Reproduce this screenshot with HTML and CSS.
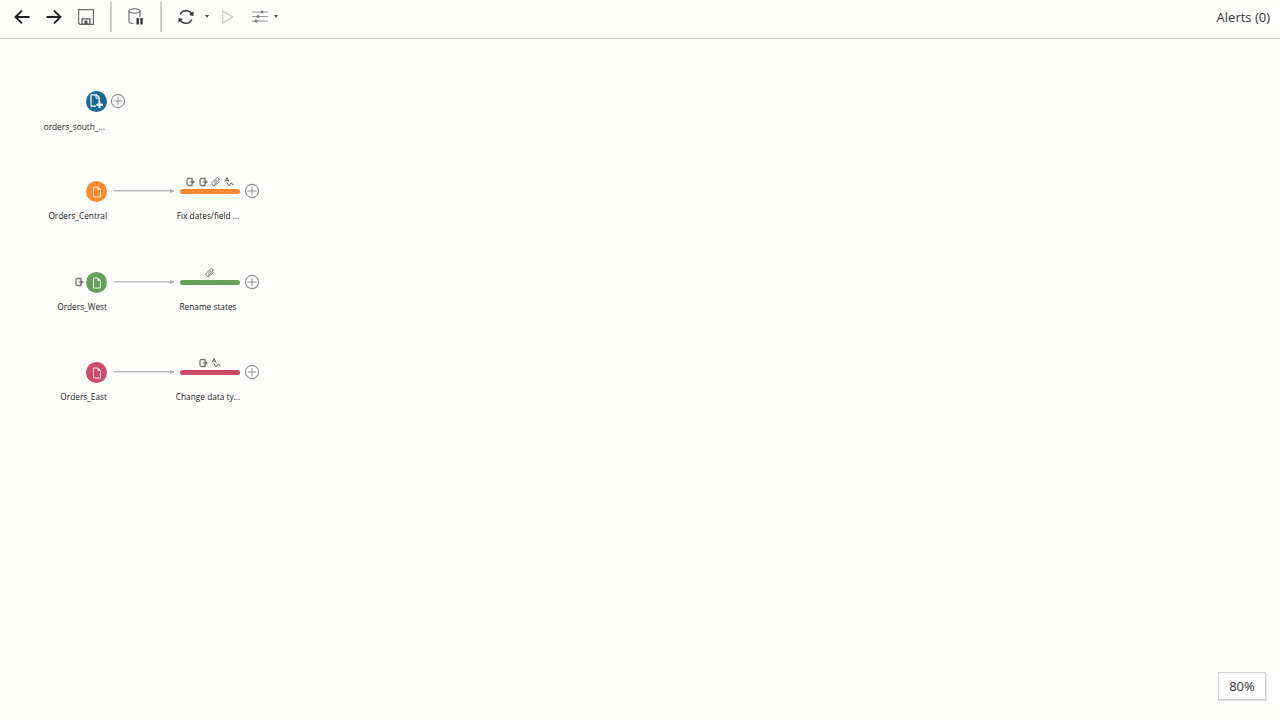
FILE: index.html
```html
<!DOCTYPE html>
<html lang="en-us">
<head>
  <meta charset="utf-8">
  <title>Flow</title>
  <link rel="stylesheet" href="styles.css">
</head>
<body>
  <svg class="defs" width="0" height="0">
    <symbol id="doc" viewBox="0 0 12 12"><path d="M2.500 1h4.500l2.500 2.500v7.500h-7z" fill="none" stroke="#fff" stroke-opacity=".85" stroke-width="1"/><path d="M6.500 1v3h3z" fill="#fff" fill-opacity=".85"/></symbol>
    <symbol id="doc-add" viewBox="0 0 14 15"><path d="M1 .8h5.500l2.700 2.700v5M6 12.200H1z M1 .8v11.400" fill="none" stroke="#fff" stroke-width="1.200"/><path d="M6 .8v3.400h3.200" fill="none" stroke="#fff" stroke-width="1"/><path d="M9.500 7.500v6.500M6.500 10.800h6.500" stroke="#fff" stroke-width="2"/></symbol>
    <symbol id="plus" viewBox="0 0 16 16"><circle cx="8" cy="8" r="6.600" fill="#fff" stroke="#929292" stroke-width="1.100"/><path d="M8 3.800v8.400M3.800 8h8.400" stroke="#8c8c8c" stroke-width="1"/></symbol>
    <symbol id="ch-clean" viewBox="0 0 10 10"><path d="M6 1.500H2.500Q1 1.500 1 3v4q0 1.500 1.500 1.500H6z" fill="none" stroke="#777" stroke-width="1.300"/><path d="M6 3 9 5 6 7z" fill="#666"/><path d="M3.500 5H7" stroke="#777" stroke-width="1"/></symbol>
    <symbol id="ch-clip" viewBox="0 0 10 10"><path d="M3 7.500 7.800 3a1.500 1.500 0 0 0-2.200-2L1.500 5a2 2 0 0 0 2.800 3L8.500 4.500M3.200 5.300 6 2.700" fill="none" stroke="#777" stroke-width="1"/></symbol>
    <symbol id="ch-type" viewBox="0 0 10 10"><path d="M1 4.500 3 .5 5 4.500M1.800 3.200h2.400" fill="none" stroke="#666" stroke-width="1"/><path d="M2.500 5.500c1.500 0 1.200 3 2.500 3.200s1-2.800 2.300-2.700 .5 2.300 2.300 1.700" fill="none" stroke="#555" stroke-width="1"/></symbol>
  </svg>

  <!-- Toolbar -->
  <header class="toolbar">
    <div class="tools">
      <svg class="tool" width="16" height="16" viewBox="0 0 16 16"><path d="M15.500 8H1.500M8 1.600 1.500 8 8 14.400" fill="none" stroke="#222" stroke-width="2"/></svg>
      <svg class="tool" width="16" height="16" viewBox="0 0 16 16"><path d="M.5 8h14M8 1.600 14.500 8 8 14.400" fill="none" stroke="#222" stroke-width="2"/></svg>
      <svg class="tool" width="16" height="16" viewBox="0 0 16 16"><path d="M.6.6h14.800v14.800H2L.6 14z" fill="none" stroke="#6f6f6f" stroke-width="1.200"/><path d="M4 15V9.800h8V15z" fill="none" stroke="#555" stroke-width="1.200"/><path d="M6.500 11.500h3V15h-3z" fill="#555"/></svg>
      <span class="divider"></span>
      <svg class="tool" width="16" height="17" viewBox="0 0 16 17"><ellipse cx="6.500" cy="3" rx="5.500" ry="2.200" fill="none" stroke="#666" stroke-width="1.100"/><path d="M1 3v10.500c0 1 1.200 1.800 4.500 2M12 3v6" fill="none" stroke="#666" stroke-width="1.100"/><path d="M8.500 10h2.400v6.500H8.500zM12.300 10h2.400v6.500h-2.400z" fill="#333"/></svg>
      <span class="divider"></span>
      <svg class="tool" width="16" height="16" viewBox="0 0 16 16"><path d="M2.200 5.500A6.500 6.500 0 0 1 14 5.500M13.800 10.500A6.500 6.500 0 0 1 2 10.500" fill="none" stroke="#333" stroke-width="1.500"/><path d="M15.600 2.200 15.400 7 11 6zM.4 13.800.6 9 5 10z" fill="#333"/></svg>
      <span class="caret"></span>
      <svg class="tool play" width="12" height="14" viewBox="0 0 12 14"><path d="M.8 1 11 7 .8 13z" fill="none" stroke="#c4c4c4" stroke-width="1.100"/></svg>
      <svg class="tool sliders" width="16" height="13" viewBox="0 0 16 13"><path d="M0 2h16M0 6.500h16M0 11h16" stroke="#9a9a9a" stroke-width="1"/><circle cx="10" cy="2" r="1.500" fill="#777"/><circle cx="6" cy="6.500" r="1.500" fill="#777"/><circle cx="4" cy="11" r="1.500" fill="#777"/></svg>
      <span class="caret"></span>
    </div>
    <span class="alerts">Alerts (0)</span>
  </header>

  <!-- Flow canvas -->
  <main class="canvas">
    <div class="flow flow-south">
      <span class="node blue"><svg class="node-icon" width="14" height="15" viewBox="0 0 14 15"><use href="#doc-add"/></svg></span>
      <svg class="add add-first" width="16" height="16"><use href="#plus"/></svg>
      <span class="label input-label">orders_south_...</span>
    </div>

    <div class="flow flow-central">
      <span class="node orange"><svg class="node-icon" width="12" height="12"><use href="#doc"/></svg></span>
      <span class="link"></span>
      <div class="changes">
        <svg width="10" height="10"><use href="#ch-clean"/></svg>
        <svg width="10" height="10"><use href="#ch-clean"/></svg>
        <svg width="10" height="10"><use href="#ch-clip"/></svg>
        <svg width="10" height="10"><use href="#ch-type"/></svg>
      </div>
      <span class="bar orange"></span>
      <svg class="add" width="16" height="16"><use href="#plus"/></svg>
      <span class="label input-label">Orders_Central</span>
      <span class="label step-label">Fix dates/field ...</span>
    </div>

    <div class="flow flow-west">
      <svg class="input-change" width="10" height="10"><use href="#ch-clean"/></svg>
      <span class="node green"><svg class="node-icon" width="12" height="12"><use href="#doc"/></svg></span>
      <span class="link"></span>
      <div class="changes">
        <svg width="10" height="10"><use href="#ch-clip"/></svg>
      </div>
      <span class="bar green"></span>
      <svg class="add" width="16" height="16"><use href="#plus"/></svg>
      <span class="label input-label">Orders_West</span>
      <span class="label step-label">Rename states</span>
    </div>

    <div class="flow flow-east">
      <span class="node red"><svg class="node-icon" width="12" height="12"><use href="#doc"/></svg></span>
      <span class="link"></span>
      <div class="changes">
        <svg width="10" height="10"><use href="#ch-clean"/></svg>
        <svg width="10" height="10"><use href="#ch-type"/></svg>
      </div>
      <span class="bar red"></span>
      <svg class="add" width="16" height="16"><use href="#plus"/></svg>
      <span class="label input-label">Orders_East</span>
      <span class="label step-label">Change data ty...</span>
    </div>

    <div class="zoom-box">80%</div>
  </main>
</body>
</html>
```
FILE: styles.css
```css
html, body {
  height: 100%;
  margin: 0;
  overflow: hidden;
  background: #fefefd;
  font-family: "Open Sans", "Liberation Sans", sans-serif;
}
.defs {
  display: none;
}
.toolbar {
  height: 33px;
  display: flex;
  justify-content: space-between;
  align-items: center;
  padding: 0 10px 5px 14px;
  border-bottom: 1px solid #cfcfcf;
}
.tools {
  display: flex;
  align-items: center;
}
.tool {
  display: block;
  margin-right: 16px;
}
.divider {
  width: 2px;
  height: 30px;
  background: #cdcdcd;
  margin: 0 16px 0 0;
}
.caret {
  width: 0;
  height: 0;
  border-left: 2.500px solid transparent;
  border-right: 2.500px solid transparent;
  border-top: 3px solid #555;
  margin-left: -5px;
  margin-right: 13px;
}
.tool.play {
  margin-right: 18px;
}
.tool.sliders {
  margin-right: 11px;
}
.alerts {
  font-size: 13px;
  margin-top: 1px;
  color: #333;
}

/* the flow diagram, each row sits at its own place on the canvas */
.canvas {
  position: relative;
  height: 681px;
}
.flow {
  position: absolute;
  left: 0;
  width: 300px;
  height: 60px;
}
.flow-south { top: 31px; }
.flow-central { top: 121px; }
.flow-west { top: 212px; }
.flow-east { top: 302px; }

.node {
  position: absolute;
  left: 86px;
  top: 21px;
  width: 21px;
  height: 21px;
  border-radius: 50%;
  display: flex;
  justify-content: center;
  align-items: center;
}
.blue { background: #1f6a96; }
.orange { background: #fb8a30; }
.green { background: #67a05a; }
.red { background: #cd4a69; }
.node-icon {
  display: block;
}
.add {
  position: absolute;
  left: 244px;
  top: 23px;
}
.flow-south .add-first {
  left: 110px;
}
.link {
  position: absolute;
  left: 114px;
  top: 30px;
  width: 60px;
  height: 1px;
  background: #bcbcbc;
  border-bottom: 1px solid #dcdcdc;
}
.link::after {
  content: "";
  position: absolute;
  right: 0;
  top: -1.500px;
  border-left: 4px solid #a8a8a8;
  border-top: 2px solid transparent;
  border-bottom: 2px solid transparent;
}
.bar {
  position: absolute;
  left: 180px;
  top: 29px;
  width: 60px;
  height: 5px;
  border-radius: 3px;
}
.changes {
  position: absolute;
  left: 180px;
  top: 17px;
  width: 60px;
  height: 10px;
  display: flex;
  justify-content: center;
  gap: 2.500px;
}
.changes svg, .input-change {
  display: block;
}
.input-change {
  position: absolute;
  left: 75px;
  top: 26px;
}
.label {
  position: absolute;
  top: 50px;
  font-size: 8.300px;
  line-height: 12px;
  color: #222;
  white-space: nowrap;
}
.input-label {
  right: 193px;
}
.flow-south .input-label {
  right: 195px;
  top: 51px;
}
.step-label {
  left: 148px;
  width: 120px;
  text-align: center;
}
.zoom-box {
  position: absolute;
  right: 14px;
  bottom: 20px;
  width: 46px;
  height: 26px;
  background: #fff;
  border: 1px solid #d2d2d2;
  box-shadow: 1px 1px 1px #e4e4e4;
  display: flex;
  justify-content: center;
  align-items: center;
  font-size: 13px;
  color: #333;
}
```
